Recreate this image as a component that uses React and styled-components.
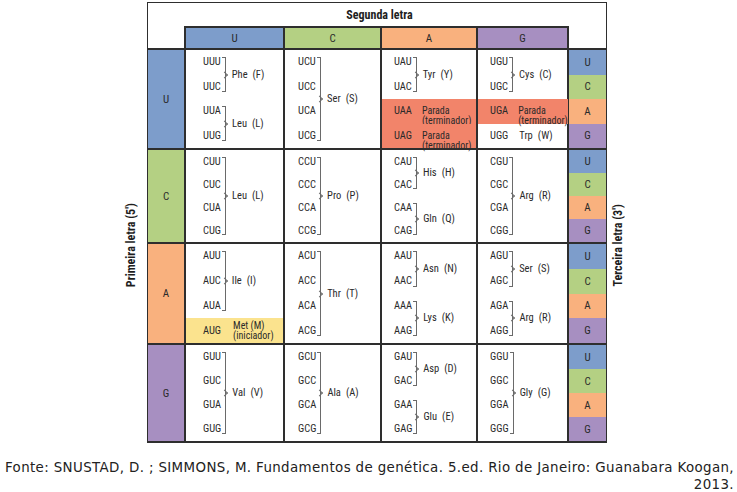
import React from 'react'
import styled, { createGlobalStyle } from 'styled-components'

const NARROW = '"Roboto Condensed", "Liberation Sans Narrow", "DejaVu Sans Condensed", "Liberation Sans", sans-serif'

const BASE = {
  U: '#7d9dcb',
  C: '#b4d083',
  A: '#f9b17e',
  G: '#a78fc1',
}
const STOP = '#f2846a'
const START = '#fbe38e'
const LINE = '#2e2e2e'

const GlobalStyle = createGlobalStyle`
  html, body {
    margin: 0;
    padding: 0;
    background: #ffffff;
  }
  body {
    font-family: ${NARROW};
    font-stretch: condensed;
    color: #2a2a2a;
  }
`

// segunda letra -> padding a esquerda dos codons
const COLS = [
  { base: 'U', pad: 17 },
  { base: 'C', pad: 13 },
  { base: 'A', pad: 12 },
  { base: 'G', pad: 12 },
]

const ROWS = [
  {
    base: 'U',
    cells: [
      [{ codons: ['UUU', 'UUC'], aa: 'Phe', ab: 'F' }, { codons: ['UUA', 'UUG'], aa: 'Leu', ab: 'L' }],
      [{ codons: ['UCU', 'UCC', 'UCA', 'UCG'], aa: 'Ser', ab: 'S' }],
      [
        { codons: ['UAU', 'UAC'], aa: 'Tyr', ab: 'Y' },
        { codons: ['UAA'], kind: 'stop' },
        { codons: ['UAG'], kind: 'stop' },
      ],
      [
        { codons: ['UGU', 'UGC'], aa: 'Cys', ab: 'C' },
        { codons: ['UGA'], kind: 'stop' },
        { codons: ['UGG'], kind: 'single', aa: 'Trp', ab: 'W' },
      ],
    ],
  },
  {
    base: 'C',
    cells: [
      [{ codons: ['CUU', 'CUC', 'CUA', 'CUG'], aa: 'Leu', ab: 'L' }],
      [{ codons: ['CCU', 'CCC', 'CCA', 'CCG'], aa: 'Pro', ab: 'P' }],
      [{ codons: ['CAU', 'CAC'], aa: 'His', ab: 'H' }, { codons: ['CAA', 'CAG'], aa: 'Gln', ab: 'Q' }],
      [{ codons: ['CGU', 'CGC', 'CGA', 'CGG'], aa: 'Arg', ab: 'R' }],
    ],
  },
  {
    base: 'A',
    cells: [
      [{ codons: ['AUU', 'AUC', 'AUA'], aa: 'Ile', ab: 'I' }, { codons: ['AUG'], kind: 'start' }],
      [{ codons: ['ACU', 'ACC', 'ACA', 'ACG'], aa: 'Thr', ab: 'T' }],
      [{ codons: ['AAU', 'AAC'], aa: 'Asn', ab: 'N' }, { codons: ['AAA', 'AAG'], aa: 'Lys', ab: 'K' }],
      [{ codons: ['AGU', 'AGC'], aa: 'Ser', ab: 'S' }, { codons: ['AGA', 'AGG'], aa: 'Arg', ab: 'R' }],
    ],
  },
  {
    base: 'G',
    cells: [
      [{ codons: ['GUU', 'GUC', 'GUA', 'GUG'], aa: 'Val', ab: 'V' }],
      [{ codons: ['GCU', 'GCC', 'GCA', 'GCG'], aa: 'Ala', ab: 'A' }],
      [{ codons: ['GAU', 'GAC'], aa: 'Asp', ab: 'D' }, { codons: ['GAA', 'GAG'], aa: 'Glu', ab: 'E' }],
      [{ codons: ['GGU', 'GGC', 'GGA', 'GGG'], aa: 'Gly', ab: 'G' }],
    ],
  },
]

export default function App() {
  return (
    <Page>
      <GlobalStyle />
      <Figure>
        <SideSlot $left>
          <VerticalText>Primeira letra (5')</VerticalText>
        </SideSlot>

        <Frame>
          <Corner $col={1} />
          <Title>Segunda letra</Title>
          <Corner $col={6} />

          {COLS.map((c, i) => (
            <HeadCell key={c.base} $color={BASE[c.base]} $last={i === 3}>
              {c.base}
            </HeadCell>
          ))}

          {ROWS.map((row) => (
            <React.Fragment key={row.base}>
              <FirstCell $color={BASE[row.base]}>{row.base}</FirstCell>
              {row.cells.map((groups, ci) => (
                <CodonCell key={ci} $last={ci === 3}>
                  {groups.map((g) => (
                    <CodonGroup key={g.codons[0]} group={g} pad={COLS[ci].pad} />
                  ))}
                </CodonCell>
              ))}
              <ThirdCell>
                {['U', 'C', 'A', 'G'].map((b) => (
                  <ThirdBlock key={b} $color={BASE[b]}>{b}</ThirdBlock>
                ))}
              </ThirdCell>
            </React.Fragment>
          ))}
        </Frame>

        <SideSlot>
          <VerticalText>Terceira letra (3')</VerticalText>
        </SideSlot>
      </Figure>

      <Source>
        Fonte: SNUSTAD, D. ; SIMMONS, M. Fundamentos de genética. 5.ed. Rio de Janeiro: Guanabara Koogan,
        <br />
        2013.
      </Source>
    </Page>
  )
}

function CodonGroup({ group, pad }) {
  const n = group.codons.length

  if (group.kind === 'stop') {
    return (
      <Group $span={n} $pad={pad} $bg={STOP}>
        <Codon>{group.codons[0]}</Codon>
        <TwoLine $gap={10} $drop>
          <span>Parada</span>
          <span>(terminador)</span>
        </TwoLine>
      </Group>
    )
  }

  if (group.kind === 'start') {
    return (
      <Group $span={n} $pad={pad} $bg={START}>
        <Codon>{group.codons[0]}</Codon>
        <TwoLine $gap={12}>
          <span>Met (M)</span>
          <span>(iniciador)</span>
        </TwoLine>
      </Group>
    )
  }

  if (group.kind === 'single') {
    return (
      <Group $span={n} $pad={pad}>
        <Codon>{group.codons[0]}</Codon>
        <Label $gap={11}>
          {group.aa}
          <Abbr>({group.ab})</Abbr>
        </Label>
      </Group>
    )
  }

  return (
    <Group $span={n} $pad={pad}>
      <CodonList $n={n}>
        {group.codons.map((c) => (
          <Codon key={c}>{c}</Codon>
        ))}
      </CodonList>
      <Bracket />
      <Label $gap={6}>
        {group.aa}
        <Abbr>({group.ab})</Abbr>
      </Label>
    </Group>
  )
}

const Page = styled.div`
  width: 737px;
  min-height: 492px;
  padding-top: 2px;
  box-sizing: border-box;
`

const Figure = styled.div`
  display: flex;
  align-items: stretch;
`

const SideSlot = styled.div`
  width: 12px;
  margin-left: ${(p) => (p.$left ? '125px' : '5px')};
  margin-right: ${(p) => (p.$left ? '10px' : '0')};
  padding-top: 46px;
  display: flex;
  align-items: center;
  justify-content: center;
`

const VerticalText = styled.div`
  writing-mode: vertical-rl;
  transform: rotate(180deg);
  font-size: 12px;
  font-weight: bold;
  color: #1e1e1e;
  white-space: nowrap;
`

const Frame = styled.div`
  display: grid;
  grid-template-columns: 36px 99px 97px 96px 93px 37px;
  grid-template-rows: 23px 22px 100px 94px 101px 98px;
  border: 1px solid ${LINE};
  border-bottom-width: 2px;
  background: #fff;
`

const Corner = styled.div`
  grid-column: ${(p) => p.$col};
  grid-row: 1 / 3;
`

const Title = styled.div`
  grid-column: 2 / 6;
  grid-row: 1;
  display: flex;
  align-items: center;
  justify-content: center;
  padding-left: 6px;
  font-size: 12px;
  font-weight: bold;
  color: #1e1e1e;
`

const HeadCell = styled.div`
  background: ${(p) => p.$color};
  border-top: 2px solid ${LINE};
  border-left: 2px solid ${LINE};
  border-right: ${(p) => (p.$last ? `2px solid ${LINE}` : 'none')};
  display: flex;
  align-items: center;
  justify-content: center;
  font-size: 11px;
`

const FirstCell = styled.div`
  grid-column: 1;
  background: ${(p) => p.$color};
  border-top: 2px solid ${LINE};
  display: flex;
  align-items: center;
  justify-content: center;
  font-size: 11px;
`

const CodonCell = styled.div`
  display: grid;
  grid-template-rows: repeat(4, 1fr);
  border-top: 2px solid ${LINE};
  border-left: 2px solid ${LINE};
  border-right: ${(p) => (p.$last ? `2px solid ${LINE}` : 'none')};
  min-height: 0;
`

const ThirdCell = styled.div`
  grid-column: 6;
  display: flex;
  flex-direction: column;
  border-top: 2px solid ${LINE};
`

const ThirdBlock = styled.div`
  flex: 1;
  background: ${(p) => p.$color};
  display: flex;
  align-items: center;
  justify-content: center;
  font-size: 11px;
`

const Group = styled.div`
  grid-row: span ${(p) => p.$span};
  display: flex;
  align-items: center;
  padding-left: ${(p) => p.$pad}px;
  background: ${(p) => p.$bg || 'transparent'};
  min-height: 0;
  font-size: 10.5px;
`

const CodonList = styled.div`
  display: grid;
  grid-template-rows: repeat(${(p) => p.$n}, 1fr);
  align-self: stretch;
  align-items: center;
`

const Codon = styled.span`
  font-size: 10.5px;
  line-height: 10px;
`

const Bracket = styled.span`
  position: relative;
  align-self: stretch;
  width: 3px;
  margin: 7px 0 7px 1px;
  border: 1px solid #6a6a6a;
  border-left: none;
  flex-shrink: 0;

  &::after {
    content: '';
    position: absolute;
    top: 50%;
    left: 0px;
    width: 4px;
    height: 4px;
    border-top: 1px solid #6a6a6a;
    border-right: 1px solid #6a6a6a;
    transform: translateY(-50%) rotate(45deg);
  }
`

const Label = styled.span`
  margin-left: ${(p) => p.$gap}px;
  white-space: nowrap;
  font-size: 10.5px;
  line-height: 10px;
`

const Abbr = styled.span`
  margin-left: 5px;
`

const TwoLine = styled.span`
  display: flex;
  flex-direction: column;
  margin-left: ${(p) => p.$gap}px;
  margin-top: ${(p) => (p.$drop ? '10px' : '0')};
  font-size: 10px;
  line-height: 10px;
  white-space: nowrap;
`

const Source = styled.p`
  margin: 16px 3px 0 3px;
  font-family: Verdana, "DejaVu Sans", sans-serif;
  font-stretch: normal;
  font-size: 13.4px;
  letter-spacing: 0.37px;
  line-height: 17px;
  color: #222;
  text-align: right;
`
